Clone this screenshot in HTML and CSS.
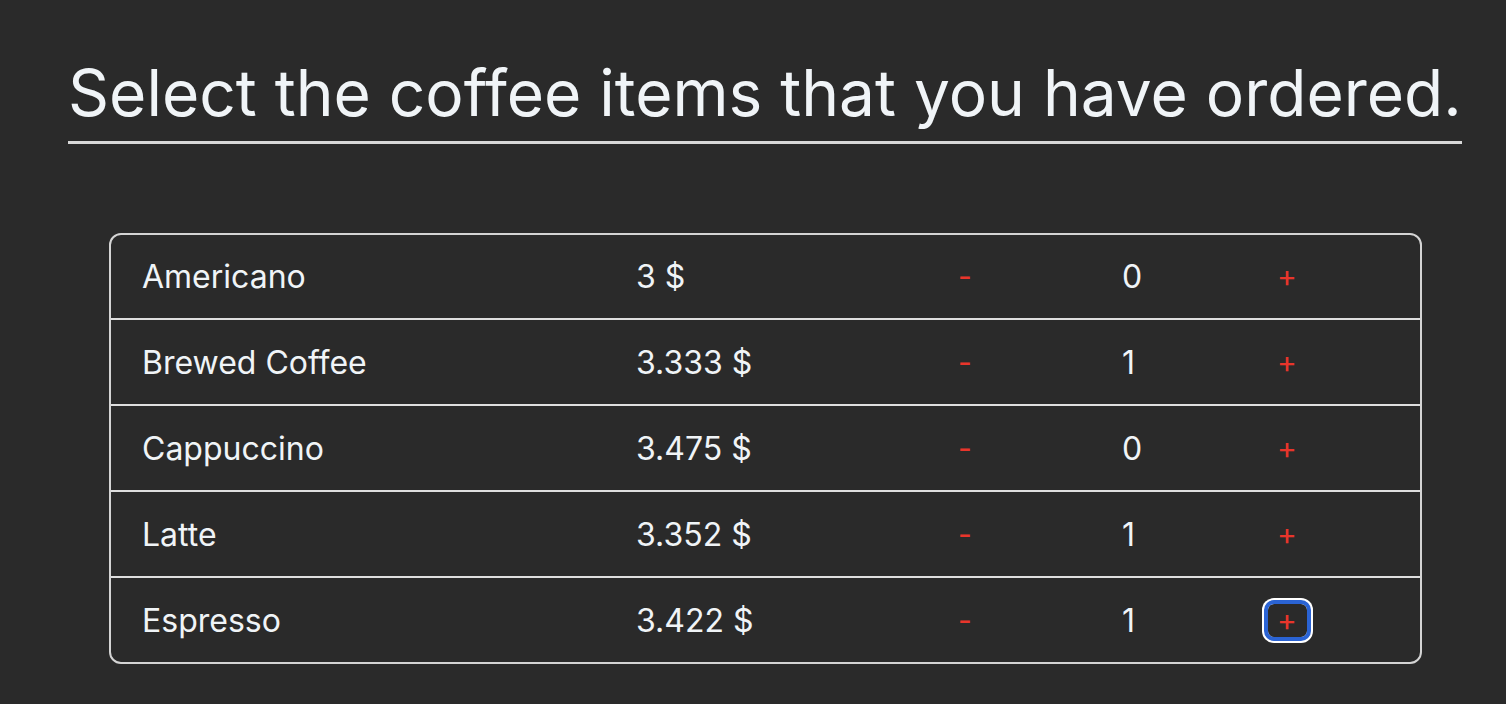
FILE: index.html
```html
<!DOCTYPE html>
<html lang="en">
<head>
  <meta charset="UTF-8" />
  <title>Coffee order</title>
  <link rel="stylesheet" href="styles.css">
</head>
<body>

  <!-- HEADER -->
  <h1 class="title">Select the coffee items that you have ordered.</h1>

  <!-- ORDER LIST -->
  <div class="orderBox">
    <div class="orderRow">
      <div class="name">Americano</div>
      <div class="price">3 $</div>
      <button class="qtyBtn">-</button>
      <div class="qty">0</div>
      <button class="qtyBtn">+</button>
    </div>
    <div class="orderRow">
      <div class="name">Brewed Coffee</div>
      <div class="price">3.333 $</div>
      <button class="qtyBtn">-</button>
      <div class="qty">1</div>
      <button class="qtyBtn">+</button>
    </div>
    <div class="orderRow">
      <div class="name">Cappuccino</div>
      <div class="price">3.475 $</div>
      <button class="qtyBtn">-</button>
      <div class="qty">0</div>
      <button class="qtyBtn">+</button>
    </div>
    <div class="orderRow">
      <div class="name">Latte</div>
      <div class="price">3.352 $</div>
      <button class="qtyBtn">-</button>
      <div class="qty">1</div>
      <button class="qtyBtn">+</button>
    </div>
    <div class="orderRow">
      <div class="name">Espresso</div>
      <div class="price">3.422 $</div>
      <button class="qtyBtn">-</button>
      <div class="qty">1</div>
      <button class="qtyBtn focused">+</button>
    </div>
  </div>

</body>
</html>
```

FILE: styles.css
```css
/* RESET */
* {
  margin: 0;
  padding: 0;
  box-sizing: border-box;
}

body {
  background-color: #2a2a2a;
  font-family: Inter, 'Noto Sans', sans-serif;
  color: #f0f4f7;
  padding: 55px 44px 0 68px;
}

/* Page title with underline */
.title {
  display: inline-block;
  font-size: 64px;
  font-weight: 400;
  line-height: 76px;
  padding-bottom: 10px;
  border-bottom: 3px solid #d8d8d8;
}

/* Order list container */
.orderBox {
  margin: 89px 0 0 41px;
  width: 1313px;
  border: 2px solid #d4d4d4;
  border-radius: 12px;
}

/* Each coffee row: name | price | - | qty | + */
.orderRow {
  display: grid;
  grid-template-columns: 525px 280px 98px 224px 98px 1fr;
  align-items: center;
  justify-items: start;
  height: 83px;
  font-size: 32px;
}
.orderRow + .orderRow {
  height: 86px;
  border-top: 2px solid #dedede;
}
.name {
  padding-left: 31px;
}
.qty {
  padding-left: 108px;
}

/* Red minus / plus buttons */
.qtyBtn {
  justify-self: center;
  background: none;
  border: none;
  color: #e8352b;
  font-family: inherit;
  font-size: 30px;
  width: 39px;
  height: 33px;
  line-height: 33px;
  border-radius: 6px;
  cursor: pointer;
}
.qtyBtn.focused {
  outline: 4px solid #2a63d4;
  box-shadow: 0 0 0 6px #ffffff;
}
```
